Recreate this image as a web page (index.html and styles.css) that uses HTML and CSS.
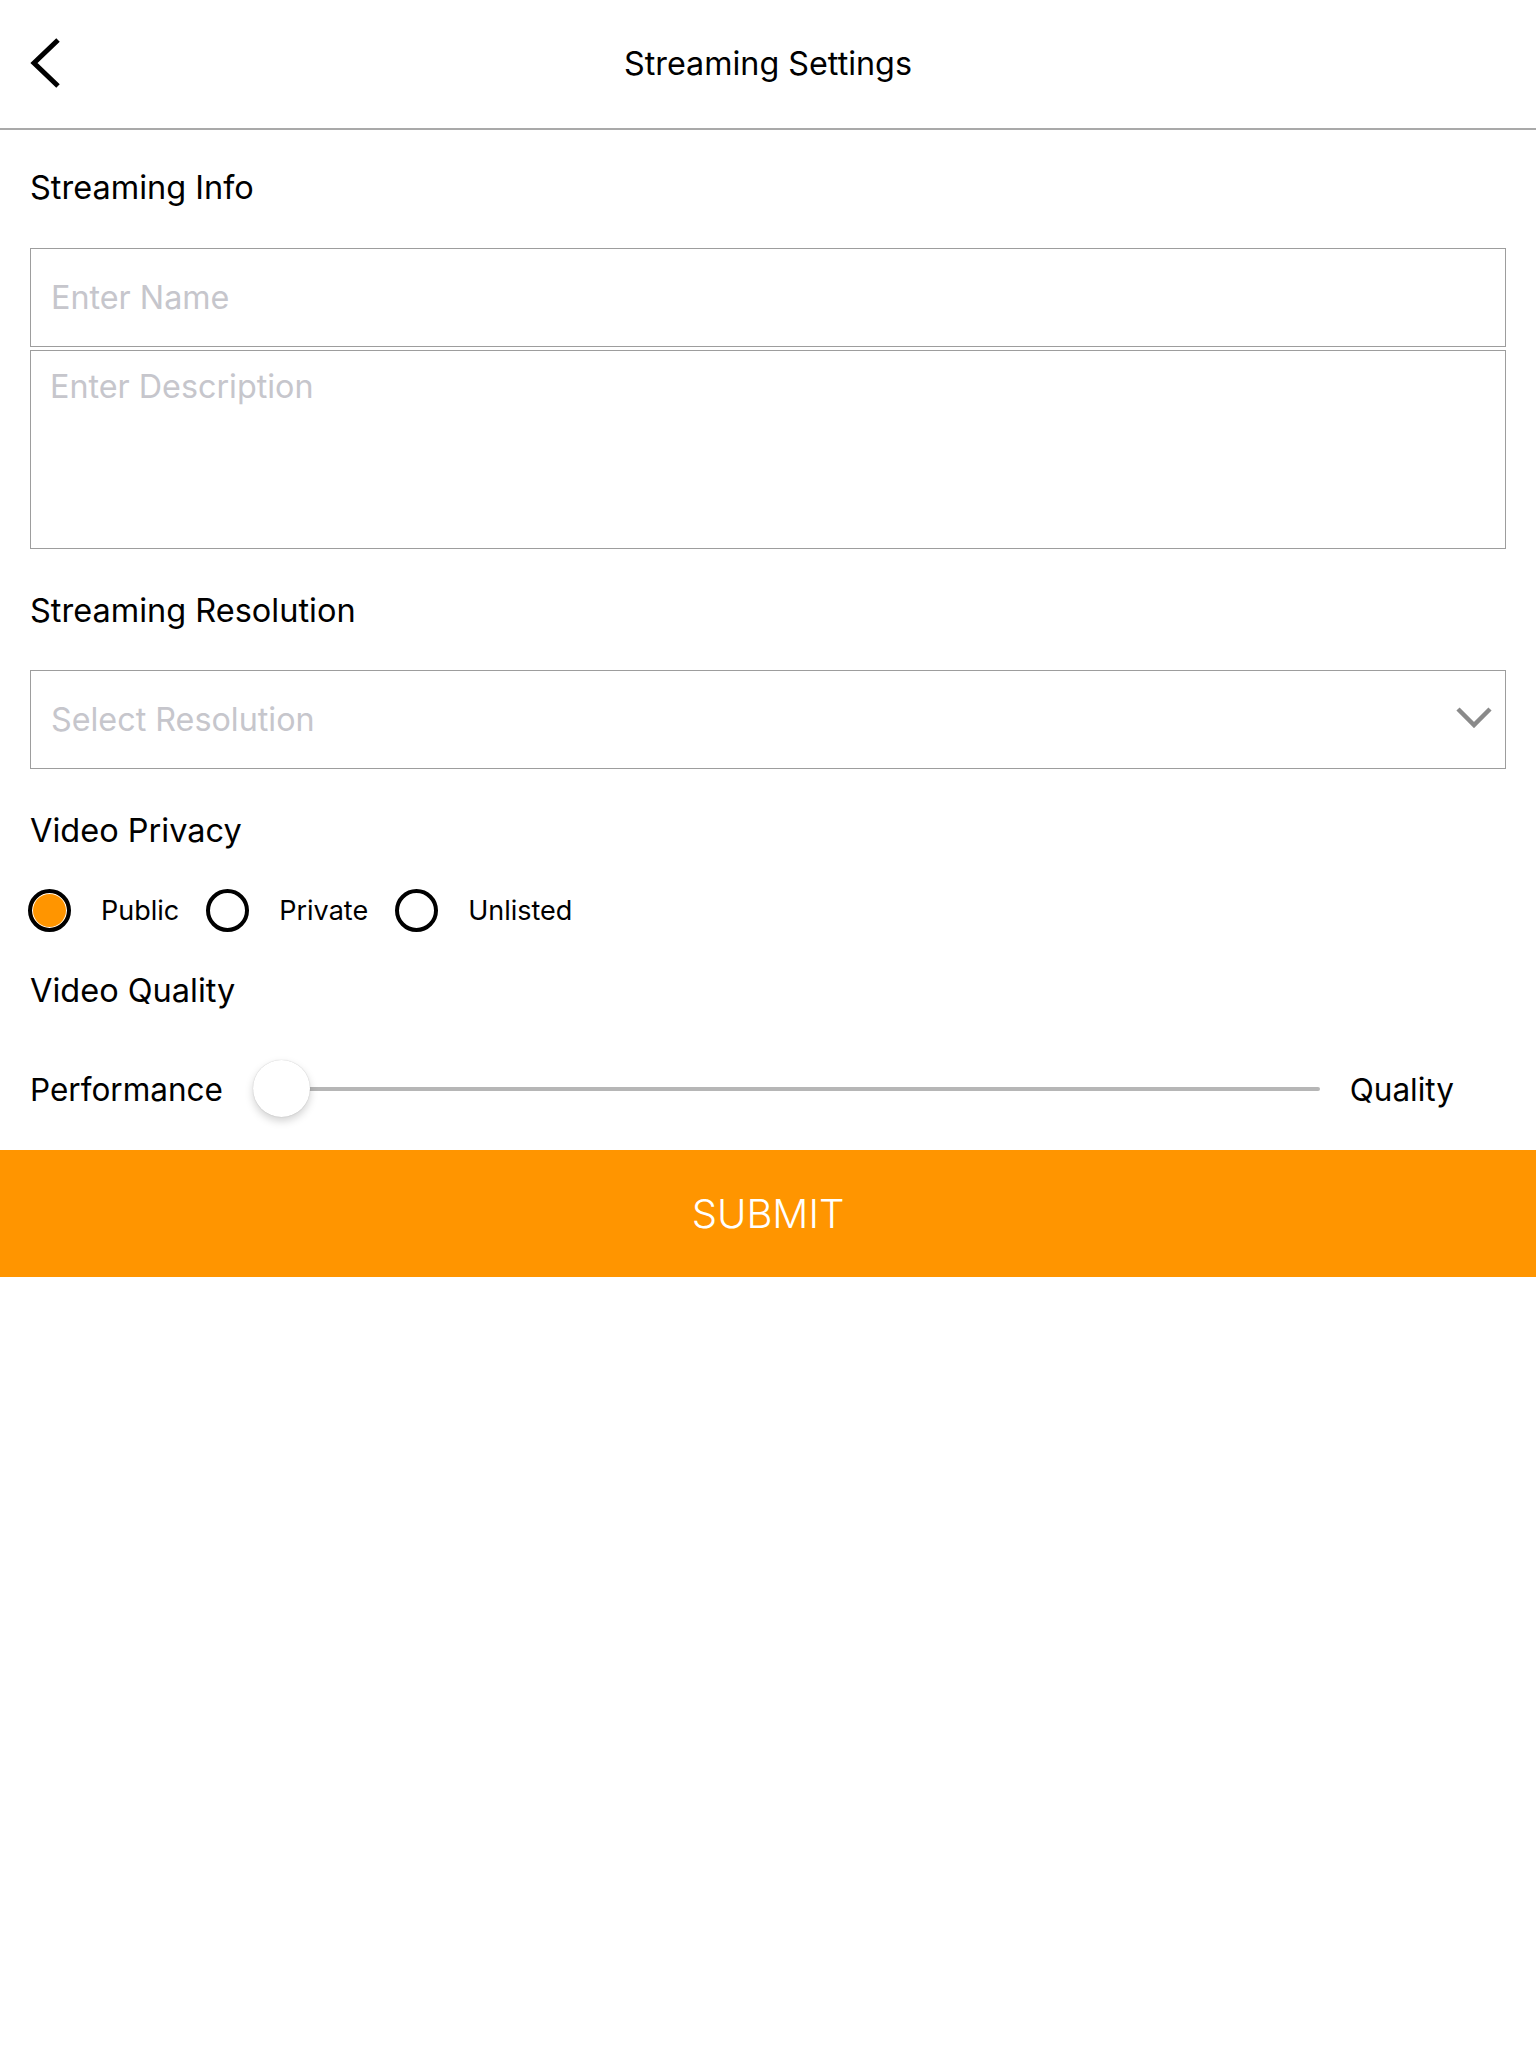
FILE: index.html
```html
<!DOCTYPE html>
<html lang="en">
<head>
<meta charset="utf-8">
<title>Streaming Settings</title>
<link rel="stylesheet" href="styles.css">
</head>
<body>
<div class="screen">
  <header class="topbar">
    <div class="back">
      <svg width="34" height="52" viewBox="0 0 34 52" aria-hidden="true">
        <polyline points="29,3 5,26 29,49" fill="none" stroke="#000" stroke-width="5" stroke-linecap="butt" stroke-linejoin="miter"/>
      </svg>
    </div>
    <div class="title">Streaming Settings</div>
    <div></div>
  </header>

  <main class="form">
    <div class="label label-first">Streaming Info</div>
    <div class="field field-name"><span class="ph">Enter Name</span></div>
    <div class="field field-desc"><span class="ph">Enter Description</span></div>

    <div class="label label-gap">Streaming Resolution</div>
    <div class="field field-select">
      <span class="ph">Select Resolution</span>
      <svg class="caret" width="36" height="22" viewBox="0 0 36 22" aria-hidden="true">
        <polyline points="2,3 18,19 34,3" fill="none" stroke="#8a8a8a" stroke-width="4.5"/>
      </svg>
    </div>

    <div class="label label-gap">Video Privacy</div>
    <div class="radios">
      <div class="option"><span class="radio checked"></span><span class="opt-text">Public</span></div>
      <div class="option"><span class="radio"></span><span class="opt-text">Private</span></div>
      <div class="option"><span class="radio"></span><span class="opt-text">Unlisted</span></div>
    </div>

    <div class="label label-quality">Video Quality</div>
    <div class="slider-row">
      <span class="end-text">Performance</span>
      <div class="slider">
        <div class="track"></div>
        <div class="thumb"></div>
      </div>
      <span class="end-text">Quality</span>
    </div>
  </main>

  <button class="submit">SUBMIT</button>
</div>
</body>
</html>
```

FILE: styles.css
```css
* { box-sizing: border-box; }

body {
  margin: 0;
  background: #fff;
  color: #000;
  font-family: Inter, "Noto Sans", sans-serif;
}

.screen {
  width: 1536px;
  display: flex;
  flex-direction: column;
}

.topbar {
  height: 130px;
  border-bottom: 2px solid #a9a9a9;
  display: grid;
  grid-template-columns: 1fr auto 1fr;
  align-items: center;
}

.back {
  display: flex;
  padding-left: 29px;
  padding-bottom: 2px;
}

.title {
  font-size: 32.3px;
  line-height: 128px;
}

.form {
  display: flex;
  flex-direction: column;
  padding: 0 30px;
}

.label {
  font-size: 32.5px;
  line-height: 40px;
  height: 40px;
}

.label-first { margin-top: 38px; margin-bottom: 40px; }
.label-gap { margin-top: 42px; }
.label-quality { margin-top: 40px; }

.field {
  border: 1px solid #9d9d9d;
  padding-left: 20px;
  font-size: 32.3px;
}

.ph { color: #c6c6cc; }

.field-name {
  height: 99px;
  display: flex;
  align-items: center;
}

.field-desc {
  margin-top: 3px;
  height: 199px;
  padding-left: 19px;
  padding-top: 16px;
  line-height: 40px;
}

.field-select {
  margin-top: 39px;
  height: 99px;
  display: flex;
  align-items: center;
  justify-content: space-between;
  padding-right: 13px;
}

.caret { margin-top: -6px; }

.radios {
  margin-top: 38px;
  margin-left: -2px;
  height: 42px;
  display: flex;
  align-items: center;
  gap: 27px;
}

.option {
  display: flex;
  align-items: center;
  gap: 30px;
}

.radio {
  width: 43px;
  height: 43px;
  border-radius: 50%;
  border: 4px solid #000;
  background: #fff;
  display: block;
  flex: none;
}

.radio.checked {
  background: #ff9500;
  box-shadow: inset 0 0 0 1px #fff;
}

.opt-text {
  font-size: 27px;
}

.slider-row {
  margin-top: 49px;
  height: 58px;
  display: grid;
  grid-template-columns: auto 1fr auto;
  align-items: center;
  column-gap: 30px;
  padding-right: 52px;
}

.end-text {
  font-size: 31.5px;
}

.slider {
  position: relative;
  height: 58px;
  display: flex;
  align-items: center;
}

.track {
  width: 100%;
  height: 4px;
  border-radius: 2px;
  background: #b6b6b6;
}

.thumb {
  position: absolute;
  left: 0;
  top: 0;
  width: 57px;
  height: 57px;
  border-radius: 50%;
  background: #fff;
  box-shadow: 0 0 1px rgba(0, 0, 0, 0.25), 0 4px 8px rgba(0, 0, 0, 0.18);
}

.submit {
  margin-top: 32px;
  height: 127px;
  border: none;
  background: #ff9500;
  color: #fff;
  font-family: Inter, "Noto Sans", sans-serif;
  font-size: 40px;
  font-weight: 300;
  padding: 0;
}
```
